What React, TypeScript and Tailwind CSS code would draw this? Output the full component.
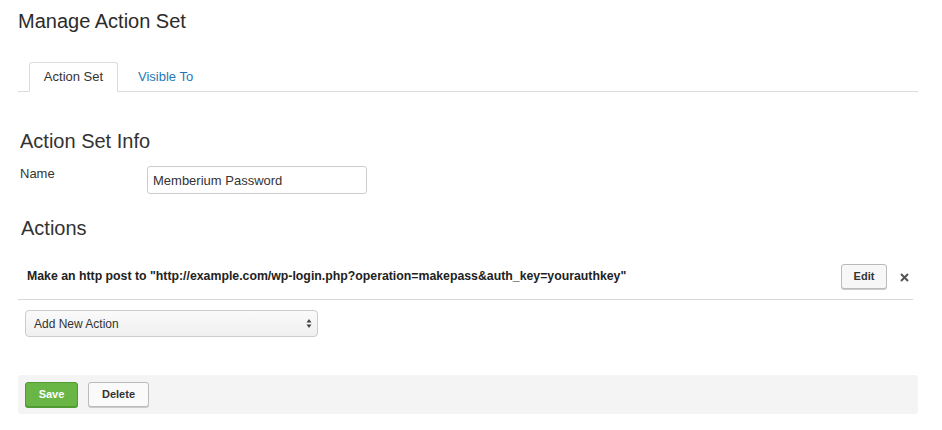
import React from 'react';

export default function App() {
  return (
    <div
      className="min-h-[430px] bg-white px-[18px] pt-[9px] text-[#333]"
      style={{ fontFamily: '"Liberation Sans", Arial, sans-serif' }}
    >
      <h1 className="text-[20px] leading-[24px] text-[#2b2b2b]">Manage Action Set</h1>

      {/* tabs */}
      <div className="mt-[29px] flex w-[900px] border-b border-[#dcdcdc] pl-[11px]">
        <div className="-mb-px flex h-[30px] w-[89px] items-center justify-center rounded-t-[3px] border border-[#dcdcdc] border-b-white bg-white text-[13px] text-[#333]">
          Action Set
        </div>
        <div className="flex h-[29px] items-center pl-[20px] text-[13px] text-[#1f78b4]">Visible To</div>
      </div>

      <h2 className="mt-[37px] pl-[2px] text-[20px] leading-[24px] text-[#333]">Action Set Info</h2>

      <div className="mt-[13px] flex items-start pl-[2px]">
        <label className="-mt-[2px] w-[127px] text-[13px] text-[#333]">Name</label>
        <input
          defaultValue="Memberium Password"
          className="h-[28px] w-[220px] rounded-[3px] border border-[#ccc] px-[5px] text-[13px] text-[#333] outline-none"
        />
      </div>

      <h2 className="mt-[22px] pl-[3px] text-[20px] leading-[24px] text-[#333]">Actions</h2>

      {/* action row */}
      <div className="mt-[20px] flex h-[40px] w-[895px] items-center border-b border-[#d8d8d8] pb-[6px] pl-[9px]">
        <div className="flex-1 text-[12.3px] font-bold text-[#222]">
          Make an http post to &quot;http://example.com/wp-login.php?operation=makepass&amp;auth_key=yourauthkey&quot;
        </div>
        <button className="flex h-[25px] w-[46px] items-center justify-center rounded-[3px] border border-[#bbb] bg-[#f7f7f7] text-[11px] font-bold text-[#333] shadow-[0_1px_0_#ccc]">
          Edit
        </button>
        <span className="ml-[12px] mr-[3px] flex w-[11px] justify-center pt-[2px]">
          <svg width="9" height="9" viewBox="0 0 9 9">
            <path d="M1 1 L8 8 M8 1 L1 8" stroke="#555" strokeWidth="2" />
          </svg>
        </span>
      </div>

      <div className="mt-[10px] pl-[7px]">
        <div className="flex h-[27px] w-[293px] items-center justify-between rounded-[4px] border border-[#ccc] bg-gradient-to-b from-[#fafafa] to-[#f0f0f0] pl-[8px] pr-[5px] text-[12px] text-[#333]">
          <span>Add New Action</span>
          <svg width="6" height="11" viewBox="0 0 6 11">
            <path d="M3 1 L5.5 4.5 H0.5 Z" fill="#444" />
            <path d="M3 10 L5.5 6.5 H0.5 Z" fill="#444" />
          </svg>
        </div>
      </div>

      {/* footer */}
      <div className="mt-[38px] flex h-[39px] w-[900px] items-center gap-[10px] rounded-[3px] bg-[#f4f4f4] pl-[7px]">
        <button className="flex h-[25px] w-[53px] items-center justify-center rounded-[3px] border border-[#4f9c33] bg-[#69b646] text-[11px] font-bold text-white shadow-[0_1px_0_#4f9c33]">
          Save
        </button>
        <button className="flex h-[25px] w-[61px] items-center justify-center rounded-[3px] border border-[#bbb] bg-[#fafafa] text-[11px] font-bold text-[#333] shadow-[0_1px_0_#ccc]">
          Delete
        </button>
      </div>
    </div>
  );
}
